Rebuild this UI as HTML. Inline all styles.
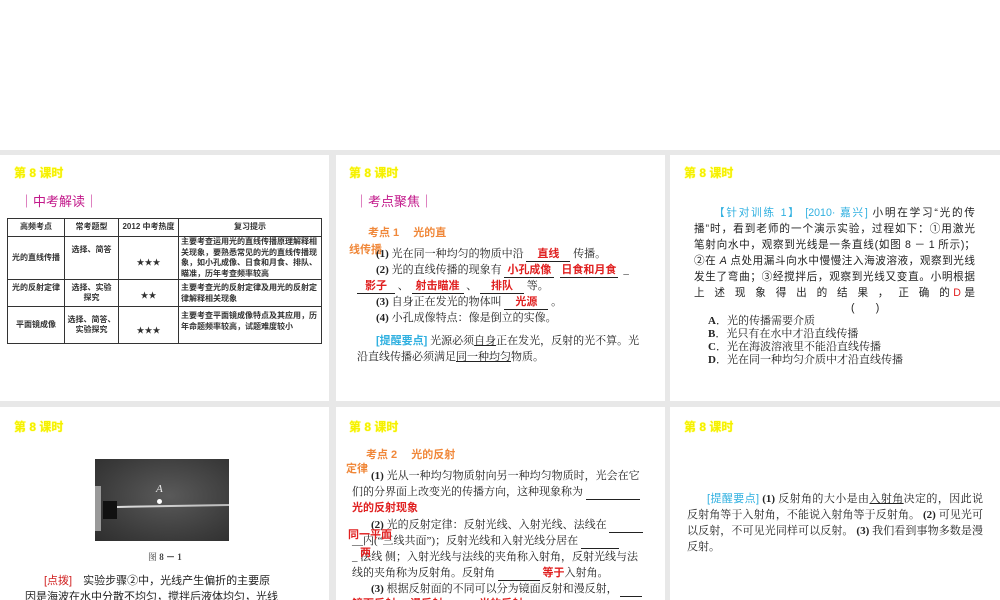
<!DOCTYPE html>
<html><head><meta charset="utf-8">
<style>
*{margin:0;padding:0;box-sizing:border-box}
body{width:1000px;height:600px;background:#fff;position:relative;overflow:hidden;font-family:"Liberation Serif","Noto Serif CJK SC","Noto Sans CJK SC",serif;color:#222}
.gray{position:absolute;background:#e8e8e8}
.p{position:absolute;background:#fff;overflow:hidden}
.t{position:absolute;font-family:"Liberation Sans","Noto Sans CJK SC",sans-serif;font-weight:bold;color:#f5f000;font-size:12px;white-space:nowrap;text-shadow:0 0 1px #ff0}
.a{position:absolute;white-space:nowrap;font-size:11px;line-height:14px}
.j{text-align:justify;text-align-last:justify;white-space:nowrap;height:16px}
.s{font-family:"Liberation Sans","Noto Sans CJK SC",sans-serif}
.mag{color:#c2188a;font-family:"Liberation Sans","Noto Sans CJK SC",sans-serif;font-size:13px}
.or{color:#f0883a;font-family:"Liberation Sans","Noto Sans CJK SC",sans-serif;font-weight:bold;font-size:11px}
.red{color:#e02020;font-family:"Liberation Sans","Noto Sans CJK SC",sans-serif;font-weight:bold}
.blue{color:#30b0e0;font-family:"Liberation Sans","Noto Sans CJK SC",sans-serif;font-weight:bold}
.u{text-decoration:underline}
.bl{display:inline-block;border-bottom:1px solid #222;text-align:center}
b{font-family:"Liberation Serif",serif}
table{position:absolute;left:7px;top:63px;width:315px;border-collapse:collapse;font-family:"Liberation Sans","Noto Sans CJK SC",sans-serif;font-size:8px;line-height:10.5px;font-weight:bold;color:#333}
td{border:1px solid #333;text-align:center;vertical-align:middle;padding:0 2px}
td.l{text-align:left}
</style></head><body>
<div class="gray" style="left:0;top:150px;width:1000px;height:5px"></div>
<div class="gray" style="left:0;top:401px;width:1000px;height:6px"></div>
<div class="gray" style="left:329px;top:150px;width:7px;height:450px"></div>
<div class="gray" style="left:665px;top:150px;width:5px;height:450px"></div>

<!-- Panel A1 -->
<div class="p" style="left:0;top:155px;width:329px;height:246px">
<div class="t" style="left:14px;top:9px">第 8 课时</div>
<div class="a mag" style="left:20px;top:40px">｜中考解读｜</div>
<table>
<tr style="height:18px"><td style="width:57px">高频考点</td><td style="width:54px">常考题型</td><td style="width:60px">2012 中考热度</td><td>复习提示</td></tr>
<tr style="height:42px"><td>光的直线传播</td><td style="vertical-align:top;padding-top:8px">选择、简答</td><td style="padding-top:10px">★★★</td><td class="l">主要考查运用光的直线传播原理解释相关现象，要熟悉常见的光的直线传播现象，如小孔成像、日食和月食、排队、瞄准，历年考查频率较高</td></tr>
<tr style="height:27px"><td style="vertical-align:top;padding-top:3px">光的反射定律</td><td>选择、实验<br>探究</td><td style="padding-top:6px">★★</td><td class="l" style="vertical-align:top;padding-top:3px">主要考查光的反射定律及用光的反射定律解释相关现象</td></tr>
<tr style="height:37px"><td>平面镜成像</td><td>选择、简答、<br>实验探究</td><td style="padding-top:12px">★★★</td><td class="l" style="vertical-align:top;padding-top:4px">主要考查平面镜成像特点及其应用，历年命题频率较高，试题难度较小</td></tr>
</table>
</div>

<!-- Panel B1 -->
<div class="p" style="left:336px;top:155px;width:329px;height:246px">
<div class="t" style="left:13px;top:9px">第 8 课时</div>
<div class="a mag" style="left:19px;top:40px">｜考点聚焦｜</div>
<div class="a or" style="left:32px;top:71px">考点 1　&nbsp;光的直</div>
<div class="a or" style="left:13px;top:88px">线传播</div>
<div class="a" style="left:40px;top:92px"><b>(1)</b> 光在同一种均匀的物质中沿 <span class="bl" style="width:44px"><span class="red">直线</span></span> 传播。</div>
<div class="a" style="left:40px;top:108px"><b>(2)</b> 光的直线传播的现象有 <span class="bl" style="width:50px"><span class="red">小孔成像</span></span>&nbsp; <span class="bl" style="width:58px"><span class="red">日食和月食</span></span>&nbsp;&nbsp;_</div>
<div class="a" style="left:21px;top:124px"><span class="bl" style="width:38px"><span class="red">影子</span></span> 、 <span class="bl" style="width:52px"><span class="red">射击瞄准</span></span> 、 <span class="bl" style="width:44px"><span class="red">排队</span></span> 等。</div>
<div class="a" style="left:40px;top:140px"><b>(3)</b> 自身正在发光的物体叫 <span class="bl" style="width:44px"><span class="red">光源</span></span> 。</div>
<div class="a" style="left:40px;top:156px"><b>(4)</b> 小孔成像特点：像是倒立的实像。</div>
<div class="a" style="left:40px;top:179px"><span class="blue">[提醒要点]</span> 光源必须<span class="u">自身</span>正在发光，反射的光不算。光</div>
<div class="a" style="left:21px;top:195px">沿直线传播必须满足<span class="u">同一种均匀</span>物质。</div>
</div>

<!-- Panel C1 -->
<div class="p" style="left:670px;top:155px;width:330px;height:246px">
<div class="t" style="left:14px;top:9px">第 8 课时</div>
<div class="s" style="position:absolute;left:24px;top:50px;width:281px;font-size:10.6px;line-height:16px">
<div class="j" style="text-indent:20px"><span class="blue" style="font-weight:normal">【针对训练 1】 [2010· 嘉兴]</span> 小明在学习“光的传</div>
<div class="j">播”时，看到老师的一个演示实验，过程如下：①用激光</div>
<div class="j">笔射向水中，观察到光线是一条直线(如图 8 － 1 所示)；</div>
<div class="j">②在 <i>A</i> 点处用漏斗向水中慢慢注入海波溶液，观察到光线</div>
<div class="j">发生了弯曲；③经搅拌后，观察到光线又变直。小明根据</div>
<div class="j">上 述 现 象 得 出 的 结 果 ， 正 确 的<span style="color:#e02020">D</span>是</div>
<div style="padding-left:157px;line-height:14px">(　　)</div>
</div>
<div class="a" style="left:38px;top:160px;line-height:13px;font-size:11px"><b>A</b>．光的传播需要介质<br><b>B</b>．光只有在水中才沿直线传播<br><b>C</b>．光在海波溶液里不能沿直线传播<br><b>D</b>．光在同一种均匀介质中才沿直线传播</div>
</div>

<!-- Panel A2 -->
<div class="p" style="left:0;top:407px;width:329px;height:193px">
<div class="t" style="left:14px;top:11px">第 8 课时</div>
<div style="position:absolute;left:95px;top:52px;width:134px;height:82px;background:radial-gradient(ellipse at 55% 45%,#5a5a5a,#3a3a3a 70%,#2e2e2e)">
<div style="position:absolute;left:0;top:27px;width:6px;height:45px;background:#999"></div>
<div style="position:absolute;left:8px;top:42px;width:14px;height:18px;background:#111"></div>
<div style="position:absolute;left:22px;top:46px;width:112px;height:2px;background:linear-gradient(90deg,#ddd,#bbb);transform:rotate(-1deg)"></div>
<div style="position:absolute;left:62px;top:40px;width:5px;height:5px;border-radius:50%;background:#fff"></div>
<div style="position:absolute;left:61px;top:24px;color:#eee;font-style:italic;font-size:11px;font-family:'Liberation Serif',serif">A</div>
</div>
<div class="a" style="left:148px;top:143px;font-size:9px;color:#444">图 <b>8 － 1</b></div>
<div class="a s" style="left:44px;top:167px;font-size:11px"><span style="color:#d02020">[点拨]</span>　实验步骤②中，光线产生偏折的主要原</div>
<div class="a s" style="left:25px;top:183px;font-size:11px">因是海波在水中分散不均匀，搅拌后液体均匀，光线</div>
</div>

<!-- Panel B2 -->
<div class="p" style="left:336px;top:407px;width:329px;height:193px">
<div class="t" style="left:13px;top:11px">第 8 课时</div>
<div class="a or" style="left:30px;top:41px">考点 2　&nbsp;光的反射</div>
<div class="a or" style="left:10px;top:55px">定律</div>
<div class="a" style="left:35px;top:62px"><b>(1)</b> 光从一种均匀物质射向另一种均匀物质时，光会在它</div>
<div class="a" style="left:16px;top:78px">们的分界面上改变光的传播方向，这种现象称为 <span class="bl" style="width:54px">&nbsp;</span></div>
<div class="a" style="left:16px;top:94px"><span class="red">光的反射现象</span></div>
<div class="a" style="left:35px;top:111px"><b>(2)</b> 光的反射定律：反射光线、入射光线、法线在 <span class="bl" style="width:34px">&nbsp;</span></div>
<div class="a" style="left:16px;top:127px">__内(“三线共面”)；反射光线和入射光线分居在 <span class="bl" style="width:38px">&nbsp;</span></div>
<div class="a red" style="left:12px;top:121px;font-size:11px">同一平面</div>
<div class="a" style="left:16px;top:143px">_ 法线 侧；入射光线与法线的夹角称入射角，反射光线与法</div>
<div class="a red" style="left:24px;top:139px">两</div>
<div class="a" style="left:16px;top:159px">线的夹角称为反射角。反射角 <span class="bl" style="width:42px">&nbsp;</span> <span class="red">等于</span>入射角。</div>
<div class="a" style="left:35px;top:175px"><b>(3)</b> 根据反射面的不同可以分为镜面反射和漫反射， <span class="bl" style="width:22px">&nbsp;</span></div>
<div class="a red" style="left:16px;top:190px">镜面反射　 漫反射　　　 光的反射</div>
</div>

<!-- Panel C2 -->
<div class="p" style="left:670px;top:407px;width:330px;height:193px">
<div class="t" style="left:14px;top:11px">第 8 课时</div>
<div style="position:absolute;left:17px;top:84px;width:296px;font-size:11px;line-height:16px">
<div class="j" style="text-indent:20px"><span class="blue" style="font-weight:normal">[提醒要点]</span> <b>(1)</b> 反射角的大小是由<span class="u">入射角</span>决定的，因此说</div>
<div class="j">反射角等于入射角，不能说入射角等于反射角。 <b>(2)</b> 可见光可</div>
<div class="j">以反射，不可见光同样可以反射。 <b>(3)</b> 我们看到事物多数是漫</div>
<div>反射。</div>
</div>
</div>
</body></html>
